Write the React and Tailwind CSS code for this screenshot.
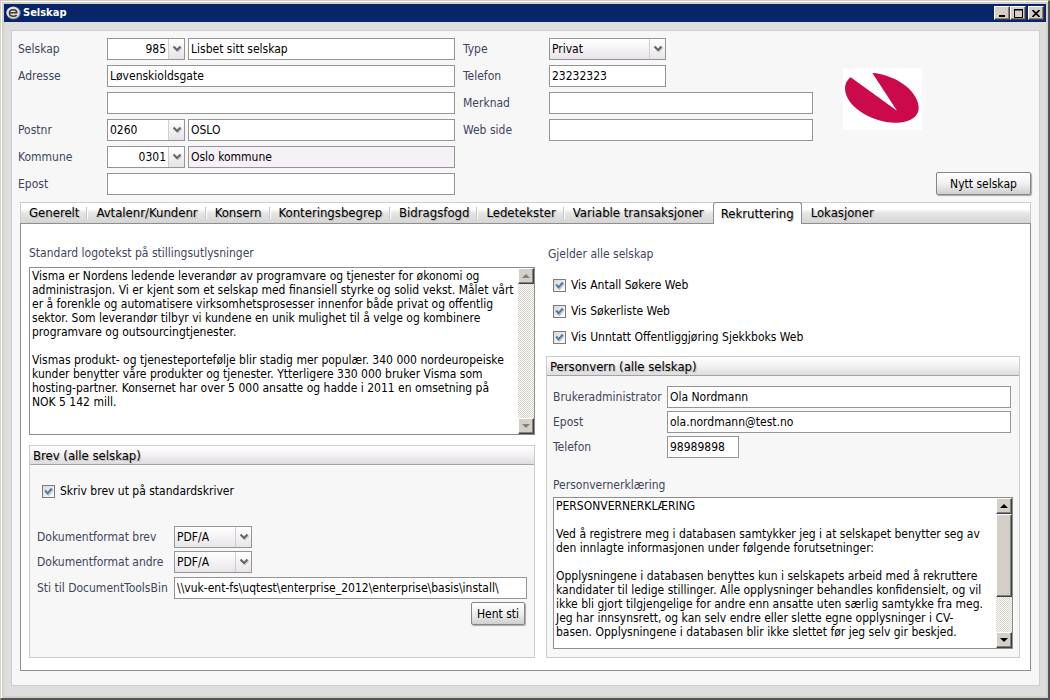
import { useState } from 'react';

const LOGO_TEXT = `Visma er Nordens ledende leverandør av programvare og tjenester for økonomi og
administrasjon. Vi er kjent som et selskap med finansiell styrke og solid vekst. Målet vårt
er å forenkle og automatisere virksomhetsprosesser innenfor både privat og offentlig
sektor. Som leverandør tilbyr vi kundene en unik mulighet til å velge og kombinere
programvare og outsourcingtjenester.

Vismas produkt- og tjenesteportefølje blir stadig mer populær. 340 000 nordeuropeiske
kunder benytter våre produkter og tjenester. Ytterligere 330 000 bruker Visma som
hosting-partner. Konsernet har over 5 000 ansatte og hadde i 2011 en omsetning på
NOK 5 142 mill.`;

const PRIVACY_TEXT = `PERSONVERNERKLÆRING

Ved å registrere meg i databasen samtykker jeg i at selskapet benytter seg av
den innlagte informasjonen under følgende forutsetninger:

Opplysningene i databasen benyttes kun i selskapets arbeid med å rekruttere
kandidater til ledige stillinger. Alle opplysninger behandles konfidensielt, og vil
ikke bli gjort tilgjengelige for andre enn ansatte uten særlig samtykke fra meg.
Jeg har innsynsrett, og kan selv endre eller slette egne opplysninger i CV-
basen. Opplysningene i databasen blir ikke slettet før jeg selv gir beskjed.`;

const TABS = [
  'Generelt',
  'Avtalenr/Kundenr',
  'Konsern',
  'Konteringsbegrep',
  'Bidragsfogd',
  'Ledetekster',
  'Variable transaksjoner',
  'Rekruttering',
  'Lokasjoner',
];

const FIELD = 'h-[22px] min-w-0 border border-[#959595] bg-white px-0.5 text-black outline-none';
const LABEL = 'shrink-0 text-[#40455c]';

function Chevron() {
  return (
    <svg width="10" height="8" viewBox="0 0 10 8" fill="none" aria-hidden="true">
      <path d="M2.500 2.500l3.500 3.500 3.500-3.500" stroke="#c9c9c9" strokeWidth="2" />
      <path d="M1.500 1.500L5 5l3.500-3.500" stroke="#666" strokeWidth="2" />
    </svg>
  );
}

function Combo({ id, value, align }) {
  return (
    <div className="flex h-[22px] w-[78px] shrink-0 border border-[#959595] bg-white">
      <input id={id} defaultValue={value} className={`h-5 min-w-0 flex-1 px-0.5 outline-none ${align === 'right' ? 'text-right' : ''}`} />
      <button
        type="button"
        aria-label="Velg"
        className="flex w-4 shrink-0 items-center justify-center border-l border-[#cfcfcf] bg-linear-to-b from-white to-[#e6e2e6]"
      >
        <Chevron />
      </button>
    </div>
  );
}

function Select({ id, value, className }) {
  return (
    <div className={`relative h-[22px] shrink-0 border border-[#959595] bg-linear-to-b from-white to-[#e9e4e9] ${className}`}>
      <select id={id} defaultValue={value} className="h-full w-full appearance-none bg-transparent pl-0.5 pr-4 outline-none">
        <option>{value}</option>
      </select>
      <span className="pointer-events-none absolute inset-y-0 right-0 flex w-4 items-center justify-center border-l border-[#cfcfcf]">
        <Chevron />
      </span>
    </div>
  );
}

function Check({ id, label }) {
  return (
    <div className="flex items-center gap-[5px]">
      <span className="relative flex h-[13px] w-[13px]">
        <input
          id={id}
          type="checkbox"
          defaultChecked
          className="peer h-[13px] w-[13px] appearance-none border border-[#7c7c7c] bg-linear-to-br from-[#d6d8dc] to-white"
        />
        <svg viewBox="0 0 13 13" className="pointer-events-none absolute inset-0 hidden peer-checked:block" fill="none" aria-hidden="true">
          <path d="M4 7l2.500 3L11 4.500" stroke="#b9c3cc" strokeWidth="1.500" />
          <path d="M3.200 5.500L5.500 8.300 9.800 3.500" stroke="#4a7ba3" strokeWidth="2" />
        </svg>
      </span>
      <label htmlFor={id}>{label}</label>
    </div>
  );
}

function PushButton({ children, className }) {
  return (
    <button
      type="button"
      className={`h-[23px] rounded-[2px] border border-[#858585] bg-linear-to-b from-white via-[#f0f0f0] to-[#cfcfcf] shadow-[1px_1px_1px_#a8a8a8] ${className}`}
    >
      {children}
    </button>
  );
}

const BEVEL = 'border border-t-white border-l-white border-r-[#404040] border-b-[#404040] bg-[#d4d0c8] shadow-[inset_-1px_-1px_0_#808080]';

function ScrollButton({ up, disabled }) {
  return (
    <button type="button" disabled={disabled} aria-label={up ? 'Rull opp' : 'Rull ned'} className={`flex h-4 shrink-0 items-center justify-center ${BEVEL}`}>
      <svg width="8" height="4" viewBox="0 0 8 4" fill={disabled ? '#808080' : '#000'} aria-hidden="true">
        <path d={up ? 'M0 4L4 0L8 4Z' : 'M0 0H8L4 4Z'} />
      </svg>
    </button>
  );
}

function ScrollText({ id, text, disabled, className }) {
  return (
    <div className={`flex border border-[#8e8e8e] bg-white ${className}`}>
      <textarea
        id={id}
        defaultValue={text}
        className="min-w-0 flex-1 resize-none overflow-hidden whitespace-pre pt-px pl-0.5 leading-[14px] outline-none"
      />
      <div className="flex w-4 shrink-0 flex-col bg-[repeating-conic-gradient(#ffffff_0_25%,#d4d0c8_0_50%)] bg-size-[2px_2px]">
        <ScrollButton up disabled={disabled} />
        <div className="flex-1">{!disabled && <div className={`h-[70%] ${BEVEL}`} />}</div>
        <ScrollButton disabled={disabled} />
      </div>
    </div>
  );
}

function Group({ title, children, className }) {
  return (
    <section className={`flex flex-col border border-[#cdcdcd] bg-[#f7f7f7] ${className}`}>
      <h2 className="h-[19px] border-b border-[#a5a3a5] bg-linear-to-b from-white via-[#f4f0f4] to-[#dedcde] px-[3px] text-[13px] leading-[19px] text-shadow-[1px_1px_1px_#b4b4b4]">
        {title}
      </h2>
      {children}
    </section>
  );
}

function TitleBar() {
  return (
    <header className="flex h-[18px] items-center bg-[#08246b] pl-0.5 pr-0.5">
      <svg width="15" height="14" viewBox="0 0 15 14" aria-hidden="true">
        <ellipse cx="7.500" cy="7" rx="7.200" ry="6.500" fill="#8e8e8e" />
        <ellipse cx="7" cy="6.500" rx="6.500" ry="5.800" fill="#e2e2e2" />
        <path d="M4.500 6.800h6.300c0-2-1.500-3-3.300-3-2.400 0-4 1.400-4 3.200s1.500 3.200 3.800 3.200c1.600 0 2.700-.5 3.300-1.300" fill="none" stroke="#3b3b3b" strokeWidth="1.600" />
      </svg>
      <h1 className="flex-1 pl-0.5 text-[11px] font-bold text-white">Selskap</h1>
      <button type="button" aria-label="Minimer" className={`flex h-[14px] w-4 items-end justify-center pb-0.5 ${BEVEL}`}>
        <svg width="6" height="2" aria-hidden="true"><path d="M0 0h6v2H0z" /></svg>
      </button>
      <button type="button" aria-label="Maksimer" className={`flex h-[14px] w-4 items-center justify-center ${BEVEL}`}>
        <svg width="9" height="9" fill="none" stroke="#000" aria-hidden="true"><path d="M.5 0v8.500h8V0M0 1h9" /><path d="M0 .5h9" /></svg>
      </button>
      <button type="button" aria-label="Lukk" className={`ml-0.5 flex h-[14px] w-4 items-center justify-center ${BEVEL}`}>
        <svg width="8" height="7" viewBox="0 0 8 7" stroke="#000" strokeWidth="1.600" aria-hidden="true"><path d="M.5 0l7 7M7.500 0l-7 7" /></svg>
      </button>
    </header>
  );
}

function CompanyForm() {
  return (
    <div className="flex gap-2">
      <div className="flex min-w-0 flex-[437] flex-col gap-[5px]">
        <div className="flex items-center">
          <label htmlFor="selskap" className={`w-[89px] ${LABEL}`}>Selskap</label>
          <Combo id="selskap" value="985" align="right" />
          <input aria-label="Navn" defaultValue="Lisbet sitt selskap" className={`ml-[3px] flex-1 ${FIELD}`} />
        </div>
        <div className="flex items-center">
          <label htmlFor="adresse" className={`w-[89px] ${LABEL}`}>Adresse</label>
          <input id="adresse" defaultValue="Løvenskioldsgate" className={`flex-1 ${FIELD}`} />
        </div>
        <div className="flex items-center pl-[89px]">
          <input aria-label="Adresse 2" className={`flex-1 ${FIELD}`} />
        </div>
        <div className="flex items-center">
          <label htmlFor="postnr" className={`w-[89px] ${LABEL}`}>Postnr</label>
          <Combo id="postnr" value="0260" />
          <input aria-label="Poststed" defaultValue="OSLO" className={`ml-[3px] flex-1 ${FIELD}`} />
        </div>
        <div className="flex items-center">
          <label htmlFor="kommune" className={`w-[89px] ${LABEL}`}>Kommune</label>
          <Combo id="kommune" value="0301" align="right" />
          <input
            aria-label="Kommunenavn"
            readOnly
            defaultValue="Oslo kommune"
            className="ml-[3px] h-[22px] min-w-0 flex-1 border border-[#959595] bg-[#f6f1f6] px-0.5 outline-none"
          />
        </div>
        <div className="flex items-center">
          <label htmlFor="epost" className={`w-[89px] ${LABEL}`}>Epost</label>
          <input id="epost" className={`flex-1 ${FIELD}`} />
        </div>
      </div>

      <div className="flex min-w-0 flex-[350] flex-col gap-[5px]">
        <div className="flex items-center">
          <label htmlFor="type" className={`w-[86px] ${LABEL}`}>Type</label>
          <Select id="type" value="Privat" className="w-[117px]" />
        </div>
        <div className="flex items-center">
          <label htmlFor="telefon" className={`w-[86px] ${LABEL}`}>Telefon</label>
          <input id="telefon" defaultValue="23232323" className={`w-[117px] ${FIELD}`} />
        </div>
        <div className="flex items-center">
          <label htmlFor="merknad" className={`w-[86px] ${LABEL}`}>Merknad</label>
          <input id="merknad" className={`flex-1 ${FIELD}`} />
        </div>
        <div className="flex items-center">
          <label htmlFor="web" className={`w-[86px] ${LABEL}`}>Web side</label>
          <input id="web" className={`flex-1 ${FIELD}`} />
        </div>
      </div>

      <div className="flex min-w-0 flex-[210] flex-col items-end justify-between pt-[30px]">
        <svg viewBox="0 0 237 186" className="mr-[109px] h-[62px] w-[79px] bg-white" role="img" aria-label="Visma">
          <path
            d="M88 15C148 18 222 62 227 116C229 148 197 164 157 164C85 163 8 115 6 62C6 47 14 34 23 28L162 128Z"
            fill="#cb0a4b"
          />
        </svg>
        <PushButton className="w-[95px]">Nytt selskap</PushButton>
      </div>
    </div>
  );
}

function TabBar({ active, onSelect }) {
  return (
    <div
      role="tablist"
      className="flex h-[21px] gap-px border border-b-0 border-[#cdcdcd] bg-linear-to-b from-white from-30% via-[#e6e6e6] via-50% to-[#d4d4d4] text-[13px]"
    >
      {TABS.map((tab, i) => (
        <button
          key={tab}
          type="button"
          role="tab"
          aria-selected={tab === active}
          onClick={() => onSelect(tab)}
          className={`relative shrink-0 whitespace-nowrap text-shadow-[1px_1px_1px_#b0b0b0] ${
            tab === active
              ? 'z-10 -mt-px -mb-px rounded-t-[3px] border border-b-0 border-[#8e8e8e] bg-white px-[7px]'
              : 'px-2'
          }`}
        >
          {tab}
          {tab !== active && TABS[i + 1] !== active && i < TABS.length - 1 && (
            <span className="absolute inset-y-1 -right-px w-0.5 border-l border-[#c6c6c6] bg-white" />
          )}
        </button>
      ))}
    </div>
  );
}

function LettersColumn() {
  return (
    <div className="flex min-w-0 flex-[506] flex-col pt-[21px]">
      <label htmlFor="logotekst" className={`leading-4 ${LABEL}`}>Standard logotekst på stillingsutlysninger</label>
      <ScrollText id="logotekst" text={LOGO_TEXT} disabled className="mt-[6px] h-[168px]" />
      <Group title="Brev (alle selskap)" className="mt-[10px] h-[213px]">
        <div className="flex flex-col px-[7px] pt-[17px]">
          <div className="px-[5px]">
            <Check id="standardskriver" label="Skriv brev ut på standardskriver" />
          </div>
          <div className="mt-[26px] flex items-center">
            <label htmlFor="format-brev" className={`w-[137px] ${LABEL}`}>Dokumentformat brev</label>
            <Select id="format-brev" value="PDF/A" className="w-[78px]" />
          </div>
          <div className="mt-[3px] flex items-center">
            <label htmlFor="format-andre" className={`w-[137px] ${LABEL}`}>Dokumentformat andre</label>
            <Select id="format-andre" value="PDF/A" className="w-[78px]" />
          </div>
          <div className="mt-1 flex items-center">
            <label htmlFor="sti" className={`w-[137px] whitespace-nowrap ${LABEL}`}>Sti til DocumentToolsBin</label>
            <input id="sti" defaultValue="\\vuk-ent-fs\uqtest\enterprise_2012\enterprise\basis\install\" className={`flex-1 ${FIELD}`} />
          </div>
          <PushButton className="mt-[3px] mr-0.5 w-[54px] self-end">Hent sti</PushButton>
        </div>
      </Group>
    </div>
  );
}

function PrivacyColumn() {
  return (
    <div className="flex min-w-0 flex-[474] flex-col pt-[22px]">
      <h2 className={`px-0.5 leading-4 ${LABEL}`}>Gjelder alle selskap</h2>
      <div className="mt-[14px] flex flex-col gap-2 px-[7px]">
        <Check id="vis-antall" label="Vis Antall Søkere Web" />
        <Check id="vis-liste" label="Vis Søkerliste Web" />
        <Check id="vis-unntatt" label="Vis Unntatt Offentliggjøring Sjekkboks Web" />
      </div>
      <Group title="Personvern (alle selskap)" className="mt-[10px] flex-1">
        <div className="flex flex-col gap-[3px] px-2 pl-[6px] pt-[10px]">
          <div className="flex items-center">
            <label htmlFor="bruker" className={`w-[114px] ${LABEL}`}>Brukeradministrator</label>
            <input id="bruker" defaultValue="Ola Nordmann" className={`flex-1 ${FIELD}`} />
          </div>
          <div className="flex items-center">
            <label htmlFor="bruker-epost" className={`w-[114px] ${LABEL}`}>Epost</label>
            <input id="bruker-epost" defaultValue="ola.nordmann@test.no" className={`flex-1 ${FIELD}`} />
          </div>
          <div className="flex items-center">
            <label htmlFor="bruker-telefon" className={`w-[114px] ${LABEL}`}>Telefon</label>
            <input id="bruker-telefon" defaultValue="98989898" className={`w-[72px] ${FIELD}`} />
          </div>
        </div>
        <label htmlFor="erklaering" className={`mt-[19px] px-[6px] leading-4 ${LABEL}`}>Personvernerklæring</label>
        <ScrollText id="erklaering" text={PRIVACY_TEXT} className="mx-[6px] mt-1 mb-[7px] h-[152px]" />
      </Group>
    </div>
  );
}

export default function App() {
  const [tab, setTab] = useState('Rekruttering');

  return (
    <div className="flex min-h-screen flex-col border-t border-r-2 border-b-2 border-l border-t-[#d4d0c8] border-r-[#55535a] border-b-[#55535a] border-l-[#d4d0c8] bg-[#dedede] font-['DejaVu_Sans_Condensed','Liberation_Sans',sans-serif] text-[12px] text-black">
      <div className="flex flex-1 flex-col border-t border-l border-white">
        <div className="flex flex-1 flex-col border-2 border-[#d4d0c8]">
          <TitleBar />
          <main className="mt-2 mr-[6px] mb-[10px] ml-[7px] flex flex-1 flex-col border border-[#cdcdcd] bg-[#f7f7f7] pt-[7px] pr-2 pb-[14px] pl-[6px]">
            <CompanyForm />
            <div className="mt-[7px] ml-0.5 flex flex-1 flex-col">
              <TabBar active={tab} onSelect={setTab} />
              <div role="tabpanel" className="flex flex-1 gap-[11px] border border-[#8e8e8e] bg-white px-2 pr-[10px] pb-3">
                <LettersColumn />
                <PrivacyColumn />
              </div>
            </div>
          </main>
        </div>
      </div>
    </div>
  );
}
